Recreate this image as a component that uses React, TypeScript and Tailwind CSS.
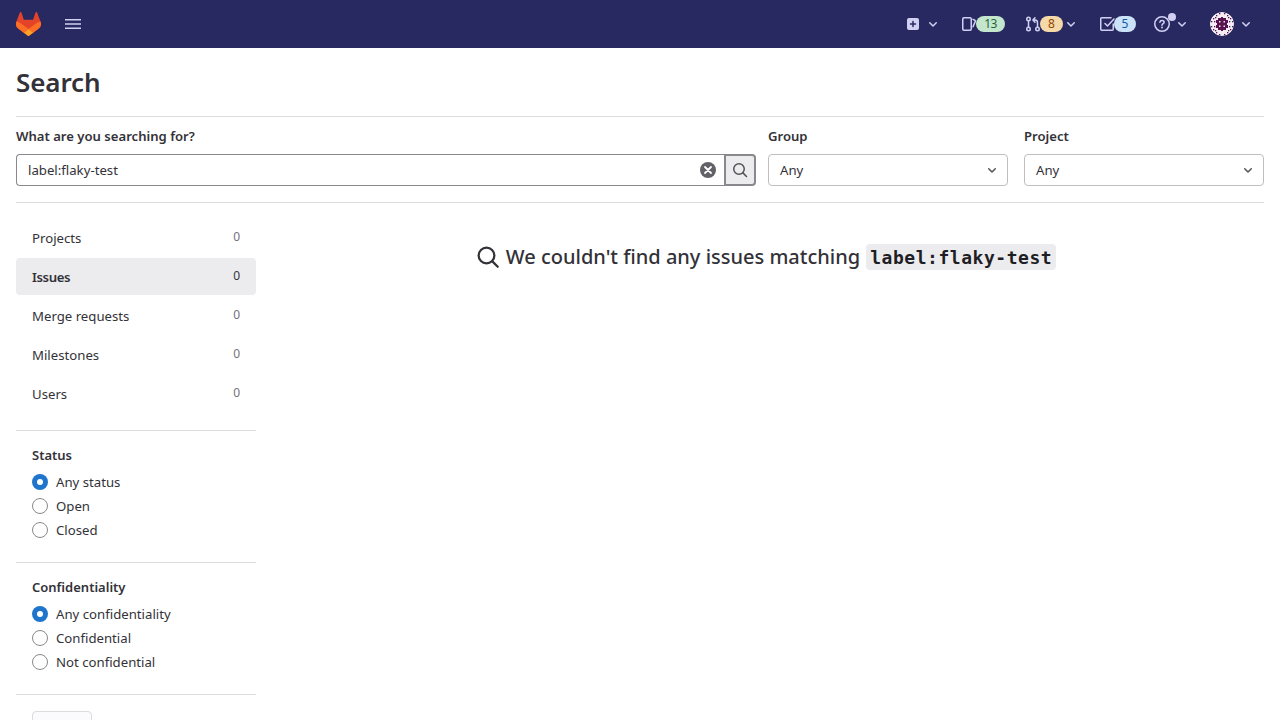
import React from "react";

type IconProps = { className?: string };

function Chevron({ className = "" }: IconProps) {
  return (
    <svg viewBox="0 0 16 16" className={`h-4 w-4 shrink-0 ${className}`} fill="none" stroke="currentColor" strokeWidth="1.5" strokeLinecap="round" strokeLinejoin="round">
      <path d="M4.75 6.75 8 10l3.25-3.25" />
    </svg>
  );
}

function SearchIcon({ className = "" }: IconProps) {
  return (
    <svg viewBox="0 0 16 16" className={`shrink-0 ${className}`} fill="none" stroke="currentColor" strokeWidth="1.5" strokeLinecap="round">
      <circle cx="7" cy="7" r="5.25" />
      <path d="m10.9 10.9 3.6 3.6" />
    </svg>
  );
}

function Tanuki() {
  return (
    <svg viewBox="0 0 25 24" className="h-6 w-[25px] shrink-0">
      <path fill="#E24329" d="m24.507 9.5-.034-.09L21.082.562a.896.896 0 0 0-1.694.091l-2.29 7.01H7.825L5.535.653a.898.898 0 0 0-1.694-.09L.451 9.411.416 9.5a6.297 6.297 0 0 0 2.09 7.278l.012.01.03.022 5.16 3.867 2.56 1.935 1.554 1.176a1.051 1.051 0 0 0 1.268 0l1.555-1.176 2.56-1.935 5.197-3.89.014-.01A6.297 6.297 0 0 0 24.507 9.5Z" />
      <path fill="#FC6D26" d="m24.507 9.5-.034-.09a11.44 11.44 0 0 0-4.56 2.051l-7.447 5.632 4.742 3.584 5.197-3.89.014-.01A6.297 6.297 0 0 0 24.507 9.5Z" />
      <path fill="#FCA326" d="m7.707 20.677 2.56 1.935 1.555 1.176a1.051 1.051 0 0 0 1.268 0l1.555-1.176 2.56-1.935-4.743-3.584-4.755 3.584Z" />
      <path fill="#FC6D26" d="M5.01 11.461a11.43 11.43 0 0 0-4.56-2.05L.416 9.5a6.297 6.297 0 0 0 2.09 7.278l.012.01.03.022 5.16 3.867 4.745-3.584-7.444-5.632Z" />
    </svg>
  );
}

const identicon = [
  [9, 1], [14, 1], [6, 3], [17, 3], [3, 6], [20, 6], [4, 9], [19, 9],
  [1, 9], [22, 9], [1, 14], [22, 14], [4, 14], [19, 14], [3, 17], [20, 17],
  [6, 20], [17, 20], [9, 22], [14, 22], [5, 5], [18, 5], [5, 18], [18, 18],
];

function Avatar() {
  return (
    <svg viewBox="0 0 24 24" className="h-6 w-6 shrink-0 rounded-full">
      <circle cx="12" cy="12" r="12" fill="#f4edf4" />
      <g fill="#58124f">
        {identicon.map(([x, y]) => (
          <rect key={`${x}-${y}`} x={x} y={y} width="1.3" height="1.3" />
        ))}
        <path d="M8 6h3v-1h2v1h3v2h2v3h-1v2h1v3h-2v2h-3v1h-2v-1H8v-2H6v-3h1v-2H6V8h2z" />
      </g>
      <g fill="#efe3ee">
        <path d="M9 9h1.500v1.500H9zM13.500 9h1.500v1.500h-1.500zM9 13.500h1.500V15H9zM13.500 13.500h1.500V15h-1.500z" />
      </g>
    </svg>
  );
}

function Header() {
  return (
    <header className="flex h-12 items-center bg-[#292961] pl-4 text-[#d1d0f3]">
      <Tanuki />
      <svg viewBox="0 0 16 16" className="ml-6 h-4 w-4" fill="currentColor">
        <path d="M0 3h16v1.5H0zM0 7.25h16v1.5H0zM0 11.5h16V13H0z" />
      </svg>
      <div className="ml-[824px] flex items-center">
        <svg viewBox="0 0 16 16" className="h-4 w-4">
          <rect x="2" y="2" width="12" height="12" rx="2" fill="currentColor" />
          <path d="M8 5.500v5M5.500 8h5" stroke="#292961" strokeWidth="1.5" strokeLinecap="round" />
        </svg>
        <Chevron className="ml-1" />
      </div>
      <div className="ml-5 flex items-center">
        <svg viewBox="0 0 16 16" className="h-4 w-4" fill="none" stroke="currentColor" strokeWidth="1.5" strokeLinejoin="round">
          <rect x="1.75" y="1.75" width="8.5" height="12.5" rx="1.2" />
          <path d="m12 3.4 1.9.9c.5.3.6.7.4 1.1L12 10.8" strokeLinecap="round" />
        </svg>
        <span className="-ml-px flex h-4 w-[29px] items-center justify-center rounded-full bg-[#c3e6cd] text-[12px] leading-4 tracking-[-0.5px] text-[#24663b]">13</span>
      </div>
      <div className="ml-5 flex items-center">
        <svg viewBox="0 0 16 16" className="h-4 w-4" fill="none" stroke="currentColor" strokeWidth="1.5" strokeLinecap="round" strokeLinejoin="round">
          <circle cx="3.5" cy="3" r="1.75" />
          <circle cx="3.5" cy="13" r="1.75" />
          <circle cx="12.5" cy="13" r="1.75" />
          <path d="M3.5 5v6M12.5 11V6.500c0-1.700-.8-2.500-2.500-2.500H8.200M10 1.700 7.900 4 10 6.300" />
        </svg>
        <span className="-ml-px flex h-4 w-[23px] items-center justify-center rounded-full bg-[#f5d9a8] text-[12px] leading-4 text-[#8f4700]">8</span>
        <Chevron />
      </div>
      <div className="ml-5 flex items-center">
        <svg viewBox="0 0 16 16" className="h-4 w-4" fill="none" stroke="currentColor" strokeWidth="1.5" strokeLinecap="round" strokeLinejoin="round">
          <path d="M14.250 8v5.250a1 1 0 0 1-1 1H2.750a1 1 0 0 1-1-1V2.750a1 1 0 0 1 1-1H12" />
          <path d="m6 7.500 2.500 2.500 6.500-7" />
        </svg>
        <span className="-ml-px flex h-4 w-[22px] items-center justify-center rounded-full bg-[#cbe2f9] text-[12px] leading-4 text-[#0b5cad]">5</span>
      </div>
      <div className="ml-[18px] flex items-center">
        <div className="relative h-4 w-4">
          <svg viewBox="0 0 16 16" className="h-4 w-4" fill="none" stroke="currentColor" strokeWidth="1.5" strokeLinecap="round" strokeLinejoin="round">
            <circle cx="8" cy="8" r="7.250" />
            <path d="M5.900 6.200C6 5 6.900 4.400 8 4.400c1.200 0 2.200.7 2.200 1.900C10.200 7.700 8 7.700 8 9.200" />
            <circle cx="8" cy="11.500" r=".35" fill="currentColor" />
          </svg>
          <span className="absolute -top-[3px] left-[14px] h-2 w-2 rounded-full bg-[#d1d0f3]" />
        </div>
        <Chevron className="ml-1" />
      </div>
      <div className="ml-5 flex items-center">
        <Avatar />
        <Chevron className="ml-1" />
      </div>
    </header>
  );
}

function Select({ label }: { label: string }) {
  return (
    <div className="w-60">
      <div className="h-[37px] pt-[9px] text-[13.1px] leading-5 font-semibold">{label}</div>
      <button className="flex h-8 w-full items-center justify-between rounded-[4px] border border-[#bfbfc3] pr-[7px] pl-[11px] leading-4">
        <span>Any</span>
        <Chevron className="text-[#535158]" />
      </button>
    </div>
  );
}

const scopes = ["Projects", "Issues", "Merge requests", "Milestones", "Users"];

function Filter({ title, options }: { title: string; options: string[] }) {
  return (
    <section className="h-[132px] border-t border-[#dcdcde] px-4 pt-[14px]">
      <h2 className="mb-[5px] h-5 text-[13px] leading-5 font-semibold">{title}</h2>
      {options.map((option, i) => (
        <label key={option} className="flex h-6 items-center gap-2">
          <span className={i === 0 ? "flex h-4 w-4 items-center justify-center rounded-full bg-[#1f75cb]" : "h-4 w-4 rounded-full border border-[#89888d] bg-white"}>
            {i === 0 && <span className="h-1.5 w-1.5 rounded-full bg-white" />}
          </span>
          <span className="pt-0.5">{option}</span>
        </label>
      ))}
    </section>
  );
}

export default function App() {
  return (
    <div className="h-[720px] w-[1280px] overflow-hidden bg-white font-['Noto_Sans','Open_Sans',sans-serif] text-[13.2px] text-[#333238]">
      <Header />
      <main className="px-4">
        <h1 className="flex h-[68px] items-center text-[26px] leading-9 font-semibold tracking-[-0.1px]">Search</h1>
        <div className="flex h-[87px] border-y border-[#dcdcde]">
          <div className="mr-3 w-[740px]">
            <div className="h-[37px] pt-[9px] text-[13.1px] leading-5 font-semibold">What are you searching for?</div>
            <div className="flex h-8">
              <div className="flex flex-1 items-center justify-between rounded-l-[4px] border border-r-0 border-[#89888d] pr-2 pl-[11px]">
                <span className="pt-0.5">label:flaky-test</span>
                <svg viewBox="0 0 16 16" className="h-4 w-4">
                  <circle cx="8" cy="8" r="8" fill="#626168" />
                  <path d="m5 5 6 6m0-6-6 6" stroke="#fff" strokeWidth="1.800" strokeLinecap="round" />
                </svg>
              </div>
              <button className="flex w-8 items-center justify-center rounded-r-[4px] border-2 border-[#89888d] bg-[#ececef] text-[#535158]">
                <SearchIcon className="h-4 w-4" />
              </button>
            </div>
          </div>
          <div className="flex gap-4">
            <Select label="Group" />
            <Select label="Project" />
          </div>
        </div>
        <div className="flex">
          <aside className="w-60">
            <nav className="flex h-[227px] flex-col gap-0.5 pt-4">
              {scopes.map((scope) => {
                const active = scope === "Issues";
                return (
                  <a key={scope} className={`flex h-[37px] shrink-0 items-center justify-between rounded-[4px] px-4 ${active ? "bg-[#ececef] font-semibold tracking-[-0.4px]" : ""}`}>
                    <span className="pt-0.5">{scope}</span>
                    <span className={`pb-[2px] text-[12px] font-normal tracking-normal ${active ? "" : "text-[#737278]"}`}>0</span>
                  </a>
                );
              })}
            </nav>
            <Filter title="Status" options={["Any status", "Open", "Closed"]} />
            <Filter title="Confidentiality" options={["Any confidentiality", "Confidential", "Not confidential"]} />
            <div className="border-t border-[#dcdcde] px-4 pt-4">
              <div className="h-8 w-[60px] rounded-[4px] border border-[#dcdcde] bg-[#fbfafd]" />
            </div>
          </aside>
          <section className="ml-3 flex h-[108px] flex-1 items-center justify-center text-[20px] font-medium">
            <SearchIcon className="mr-1.5 h-6 w-6" />
            <span>We couldn't find any issues matching</span>
            <code className="ml-1.5 flex h-[26px] items-center rounded-[4px] bg-[#ececef] px-1 text-[18px] font-bold tracking-[0.54px] text-[#1f1e24] [font-family:'DejaVu_Sans_Mono',monospace]">label:flaky-test</code>
          </section>
        </div>
      </main>
    </div>
  );
}
